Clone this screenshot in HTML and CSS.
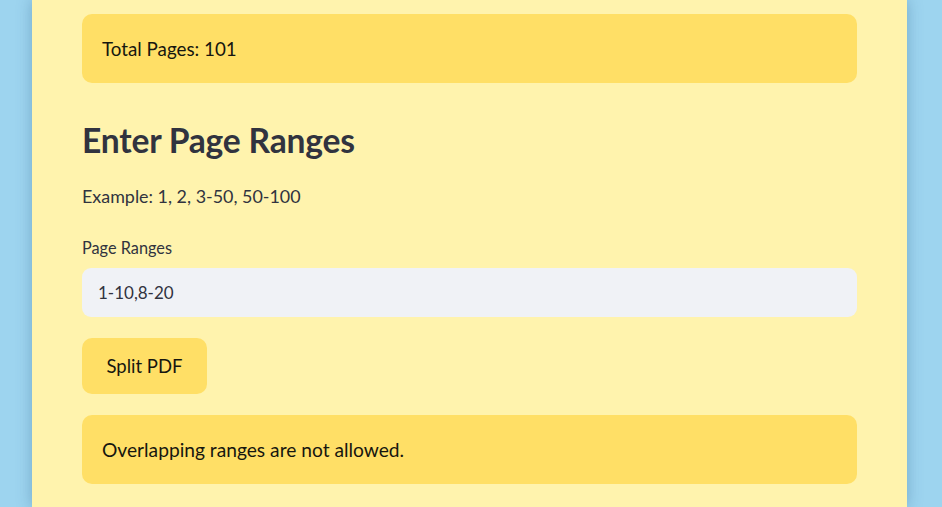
FILE: index.html
```html
<!DOCTYPE html>
<html>
<head>
<meta charset="utf-8">
<link rel="stylesheet" href="styles.css">
</head>
<body>
<div class="page">
  <main class="panel">
    <div class="alert">Total Pages: 101</div>
    <h2 class="heading">Enter Page Ranges</h2>
    <p class="example">Example: 1, 2, 3-50, 50-100</p>
    <label class="label" for="ranges">Page Ranges</label>
    <input class="input" id="ranges" type="text" value="1-10,8-20">
    <button class="btn" type="button">Split PDF</button>
    <div class="alert alert-last">Overlapping ranges are not allowed.</div>
  </main>
</div>
</body>
</html>
```
FILE: styles.css
```css
* { box-sizing: border-box; }
html, body { margin: 0; padding: 0; height: 100%; }
body {
  background: #9dd4ef;
  font-family: "Lato", "Noto Sans", sans-serif;
  color: #31333f;
  overflow: hidden;
}
.page {
  height: 100%;
  padding: 0 35px 0 32px;
  display: flex;
}
.panel {
  flex: 1;
  background: #fff3ad;
  box-shadow: 0 0 14px rgba(40, 90, 130, 0.35);
  padding: 14px 50px 0 50px;
  display: flex;
  flex-direction: column;
  align-items: flex-start;
}
.alert {
  align-self: stretch;
  background: #ffdf66;
  border-radius: 10px;
  height: 69px;
  padding: 0 20px;
  display: flex;
  align-items: center;
  font-size: 18.8px;
  color: #16160f;
}
.heading {
  margin: 35px 0 0 0;
  font-size: 33.6px;
  font-weight: 700;
  line-height: 44px;
  letter-spacing: -0.2px;
}
.example {
  margin: 22px 0 0 0;
  font-size: 17.9px;
  line-height: 24px;
}
.label {
  margin-top: 30px;
  font-size: 16.3px;
  line-height: 20px;
}
.input {
  align-self: stretch;
  margin-top: 10px;
  height: 49px;
  border: none;
  border-radius: 9px;
  background: #f0f2f6;
  padding: 0 16px;
  font-family: inherit;
  font-size: 17px;
  color: #31333f;
  outline: none;
}
.btn {
  margin-top: 21px;
  width: 125px;
  height: 56px;
  border: none;
  border-radius: 10px;
  background: #ffdf66;
  font-family: inherit;
  font-size: 18.5px;
  color: #16160f;
  padding: 0;
}
.alert-last { margin-top: 21px; font-size: 19.2px; }
```
